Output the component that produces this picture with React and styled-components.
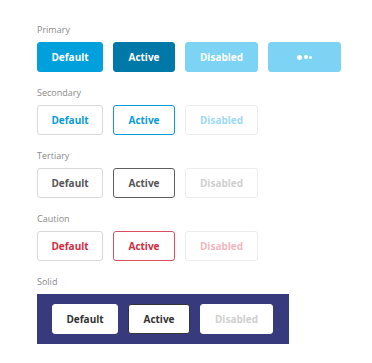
import styled, { createGlobalStyle, css } from "styled-components";

const GlobalStyle = createGlobalStyle`
    body {
        margin: 0;
        background: #ffffff;
        font-family: "Open Sans", "Lato", sans-serif;
    }
`;

const Page = styled.div`
    padding: 24px 20px 0 37px;
`;

const Section = styled.div`
    margin-bottom: 15px;
`;

const Label = styled.div`
    font-size: 9px;
    color: #8a8a8a;
    height: 12px;
    line-height: 12px;
    margin-bottom: 6px;
`;

const Row = styled.div`
    display: flex;
    gap: 10px;
`;

const Panel = styled.div`
    display: flex;
    gap: 10px;
    background: #373a7d;
    width: 252px;
    box-sizing: border-box;
    padding: 10px 15px;
`;

const themes = {
    primary: {
        default: css`background: #00a0dc; color: #fff; border-color: #00a0dc;`,
        active: css`background: #0079a8; color: #fff; border-color: #0079a8;`,
        disabled: css`background: #7dd3f3; color: #fff; border-color: #7dd3f3;`,
    },
    secondary: {
        default: css`background: #fff; color: #0a9bd6; border-color: #d9d9d9;`,
        active: css`background: #fff; color: #0a9bd6; border-color: #0a9bd6;`,
        disabled: css`background: #fff; color: #9ddaf2; border-color: #ececec;`,
    },
    tertiary: {
        default: css`background: #fff; color: #555; border-color: #d9d9d9;`,
        active: css`background: #fff; color: #555; border-color: #5e5e5e;`,
        disabled: css`background: #fff; color: #cfcfcf; border-color: #ececec;`,
    },
    caution: {
        default: css`background: #fff; color: #d12b3f; border-color: #d9d9d9;`,
        active: css`background: #fff; color: #d12b3f; border-color: #d8505f;`,
        disabled: css`background: #fff; color: #f2b7bf; border-color: #ececec;`,
    },
    solid: {
        default: css`background: #fff; color: #333; border-color: #fff;`,
        active: css`background: #fff; color: #333; border-color: #333;`,
        disabled: css`background: #fff; color: #cfcfcf; border-color: #fff;`,
    },
};

const Button = styled.button`
    box-sizing: border-box;
    flex-shrink: 0;
    height: 30px;
    width: ${(p) => p.$width}px;
    padding: 0;
    border: 1px solid;
    border-radius: 3px;
    font-family: "Open Sans", "Lato", sans-serif;
    font-weight: 700;
    font-size: 10px;
    display: flex;
    align-items: center;
    justify-content: center;
    cursor: pointer;
    ${(p) => themes[p.$kind][p.$state]}
`;

const Dots = styled.span`
    display: flex;
    align-items: center;
    gap: 1.5px;
`;

const Dot = styled.span`
    display: block;
    width: ${(p) => p.$size}px;
    height: ${(p) => p.$size}px;
    border-radius: 50%;
    background: #fff;
`;

function Group({ kind, loading }) {
    return (
        <>
            <Button $kind={kind} $state="default" $width={66}>Default</Button>
            <Button $kind={kind} $state="active" $width={62}>Active</Button>
            <Button $kind={kind} $state="disabled" $width={73}>Disabled</Button>
            {loading && (
                <Button $kind={kind} $state="disabled" $width={73}>
                    <Dots>
                        <Dot $size={5} />
                        <Dot $size={4} />
                        <Dot $size={3} />
                    </Dots>
                </Button>
            )}
        </>
    );
}

export default function App() {
    return (
        <Page>
            <GlobalStyle />
            <Section>
                <Label>Primary</Label>
                <Row><Group kind="primary" loading /></Row>
            </Section>
            <Section>
                <Label>Secondary</Label>
                <Row><Group kind="secondary" /></Row>
            </Section>
            <Section>
                <Label>Tertiary</Label>
                <Row><Group kind="tertiary" /></Row>
            </Section>
            <Section>
                <Label>Caution</Label>
                <Row><Group kind="caution" /></Row>
            </Section>
            <Section>
                <Label>Solid</Label>
                <Panel><Group kind="solid" /></Panel>
            </Section>
        </Page>
    );
}
